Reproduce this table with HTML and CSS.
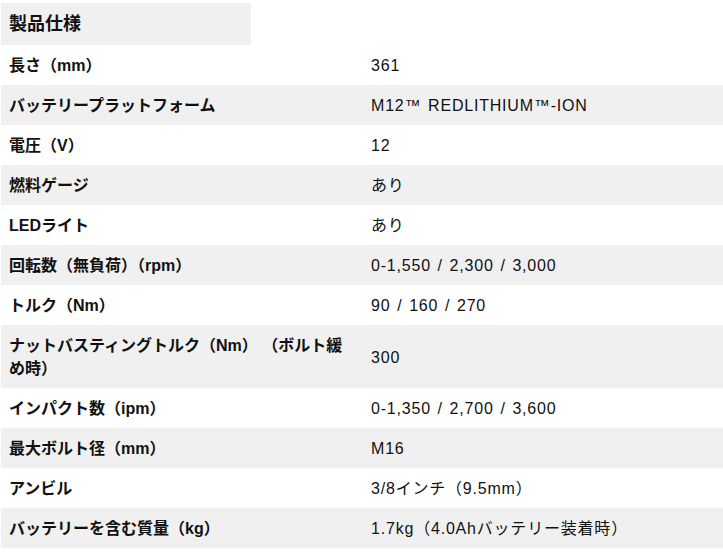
FILE: index.html
```html
<!DOCTYPE html>
<html lang="ja">
<head>
<meta charset="utf-8">
<link rel="stylesheet" href="styles.css">
</head>
<body>
<div class="spec">
  <h2 class="spec-title">製品仕様</h2>
  <table class="spec-table">
    <tbody>
      <tr><th>長さ（mm）</th><td>361</td></tr>
      <tr><th>バッテリープラットフォーム</th><td>M12™ REDLITHIUM™-ION</td></tr>
      <tr><th>電圧（V）</th><td>12</td></tr>
      <tr><th>燃料ゲージ</th><td>あり</td></tr>
      <tr><th>LEDライト</th><td>あり</td></tr>
      <tr><th>回転数（無負荷）（rpm）</th><td>0-1,550 / 2,300 / 3,000</td></tr>
      <tr><th>トルク（Nm）</th><td>90 / 160 / 270</td></tr>
      <tr><th>ナットバスティングトルク（Nm） （ボルト緩め時）</th><td>300</td></tr>
      <tr><th>インパクト数（ipm）</th><td>0-1,350 / 2,700 / 3,600</td></tr>
      <tr><th>最大ボルト径（mm）</th><td>M16</td></tr>
      <tr><th>アンビル</th><td>3/8インチ（9.5mm）</td></tr>
      <tr><th>バッテリーを含む質量（kg）</th><td>1.7kg（4.0Ahバッテリー装着時）</td></tr>
    </tbody>
  </table>
</div>
</body>
</html>
```
FILE: styles.css
```css
html, body {
  margin: 0;
  padding: 0;
  background: #ffffff;
}
body {
  font-family: "Liberation Sans", "Noto Sans CJK JP", sans-serif;
  color: #111111;
}
.spec {
  padding: 3px 0 0 1px;
}
.spec-title {
  margin: 0;
  width: 250px;
  height: 42px;
  box-sizing: border-box;
  padding: 0 8px;
  background: #f0f0f0;
  font-size: 18px;
  font-weight: bold;
  line-height: 42px;
}
.spec-table {
  width: 722px;
  border-collapse: collapse;
  table-layout: fixed;
  font-size: 16px;
}
.spec-table th,
.spec-table td {
  padding: 9px 8px 8px 8px;
  line-height: 23px;
  text-align: left;
  vertical-align: middle;
}
.spec-table th {
  width: 345px;
  font-weight: bold;
}
.spec-table td {
  font-weight: normal;
  padding-left: 9px;
  letter-spacing: 0.8px;
  word-spacing: 1.5px;
}
.spec-table tr:nth-child(even) {
  background: #f0f0f0;
}
```
